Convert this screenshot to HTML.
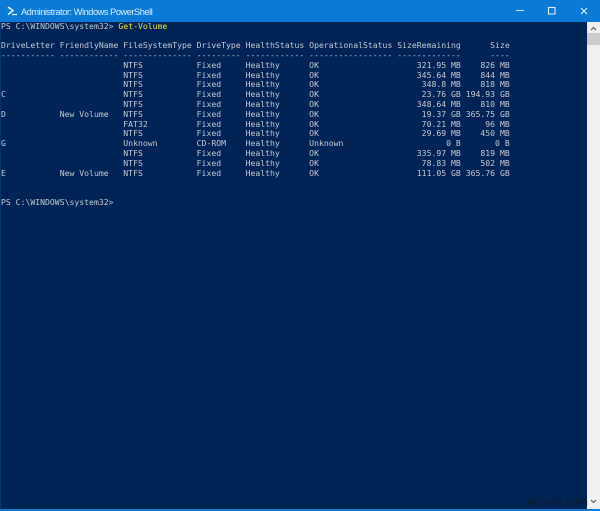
<!DOCTYPE html>
<html>
<head>
<meta charset="utf-8">
<style>
html,body{margin:0;padding:0;background:#012456;}
#w{position:relative;width:600px;height:511px;overflow:hidden;background:#012456;}
#t{position:absolute;left:0;top:0;width:600px;height:22px;background:#0a7ad6;}
#tt{position:absolute;left:21px;top:5px;font:9.2px/14px "Liberation Sans",sans-serif;letter-spacing:-.43px;color:#dcecf9;white-space:nowrap;}
#c{position:absolute;left:1px;top:21.6px;margin:0;font:8.13px/9.8px "DejaVu Sans Mono",monospace;color:#c4c9d2;white-space:pre;filter:blur(.25px);}
#c b{font-weight:normal;color:#e6e64a;}
#sb{position:absolute;left:587px;top:22px;width:13px;height:487px;background:#f0f0f0;}
#th{position:absolute;left:0;top:11px;width:13px;height:12px;background:#cdcdcd;}
#bt{position:absolute;left:0;top:509px;width:600px;height:2px;background:#0a7ad6;}
#lf{position:absolute;left:0;top:22px;width:1px;height:487px;background:#03366f;}
#wm{position:absolute;left:527px;top:494px;font:12.2px/14px "Liberation Sans",sans-serif;color:#0c1a30;white-space:nowrap;}
svg{position:absolute;}
</style>
</head>
<body>
<div id="w">
<div id="t"></div>
<svg style="left:7px;top:6px" width="11" height="10" viewBox="0 0 11 10"><path d="M1 1 L6 4.5 L1 8.5" fill="none" stroke="#e8f2fb" stroke-width="1.6"/><path d="M5 8.5 H10" stroke="#e8f2fb" stroke-width="1.3"/></svg>
<div id="tt">Administrator: Windows PowerShell</div>
<svg style="left:510px;top:0" width="90" height="22" viewBox="0 0 90 22"><path d="M6 10.5 H14" stroke="#bcdcf4" stroke-width="1.2"/><rect x="38.5" y="7.5" width="6.5" height="6.5" fill="none" stroke="#dcecf9" stroke-width="1.1"/><path d="M71 8 L77 14 M77 8 L71 14" stroke="#e6f1fa" stroke-width="1.1"/></svg>
<pre id="c">PS C:\WINDOWS\system32&gt; <b>Get-Volume</b>

DriveLetter FriendlyName FileSystemType DriveType HealthStatus OperationalStatus SizeRemaining      Size
----------- ------------ -------------- --------- ------------ ----------------- -------------      ----
                         NTFS           Fixed     Healthy      OK                    321.95 MB    826 MB
                         NTFS           Fixed     Healthy      OK                    345.64 MB    844 MB
                         NTFS           Fixed     Healthy      OK                     348.8 MB    818 MB
C                        NTFS           Fixed     Healthy      OK                     23.76 GB 194.93 GB
                         NTFS           Fixed     Healthy      OK                    348.64 MB    810 MB
D           New Volume   NTFS           Fixed     Healthy      OK                     19.37 GB 365.75 GB
                         FAT32          Fixed     Healthy      OK                     70.21 MB     96 MB
                         NTFS           Fixed     Healthy      OK                     29.69 MB    450 MB
G                        Unknown        CD-ROM    Healthy      Unknown                     0 B       0 B
                         NTFS           Fixed     Healthy      OK                    335.97 MB    819 MB
                         NTFS           Fixed     Healthy      OK                     78.83 MB    502 MB
E           New Volume   NTFS           Fixed     Healthy      OK                    111.05 GB 365.76 GB


PS C:\WINDOWS\system32&gt;</pre>
<div id="lf"></div>
<div id="sb"><div id="th"></div>
<svg style="left:3px;top:4px" width="7" height="5" viewBox="0 0 7 5"><path d="M1 4 L3.5 1.5 L6 4" fill="none" stroke="#606060" stroke-width="1.2"/></svg>
<svg style="left:3px;top:477px" width="7" height="5" viewBox="0 0 7 5"><path d="M1 1 L3.5 3.5 L6 1" fill="none" stroke="#606060" stroke-width="1.2"/></svg>
</div>
<div id="wm">wsxdn.com</div>
<div id="bt"></div>
</div>
</body>
</html>
